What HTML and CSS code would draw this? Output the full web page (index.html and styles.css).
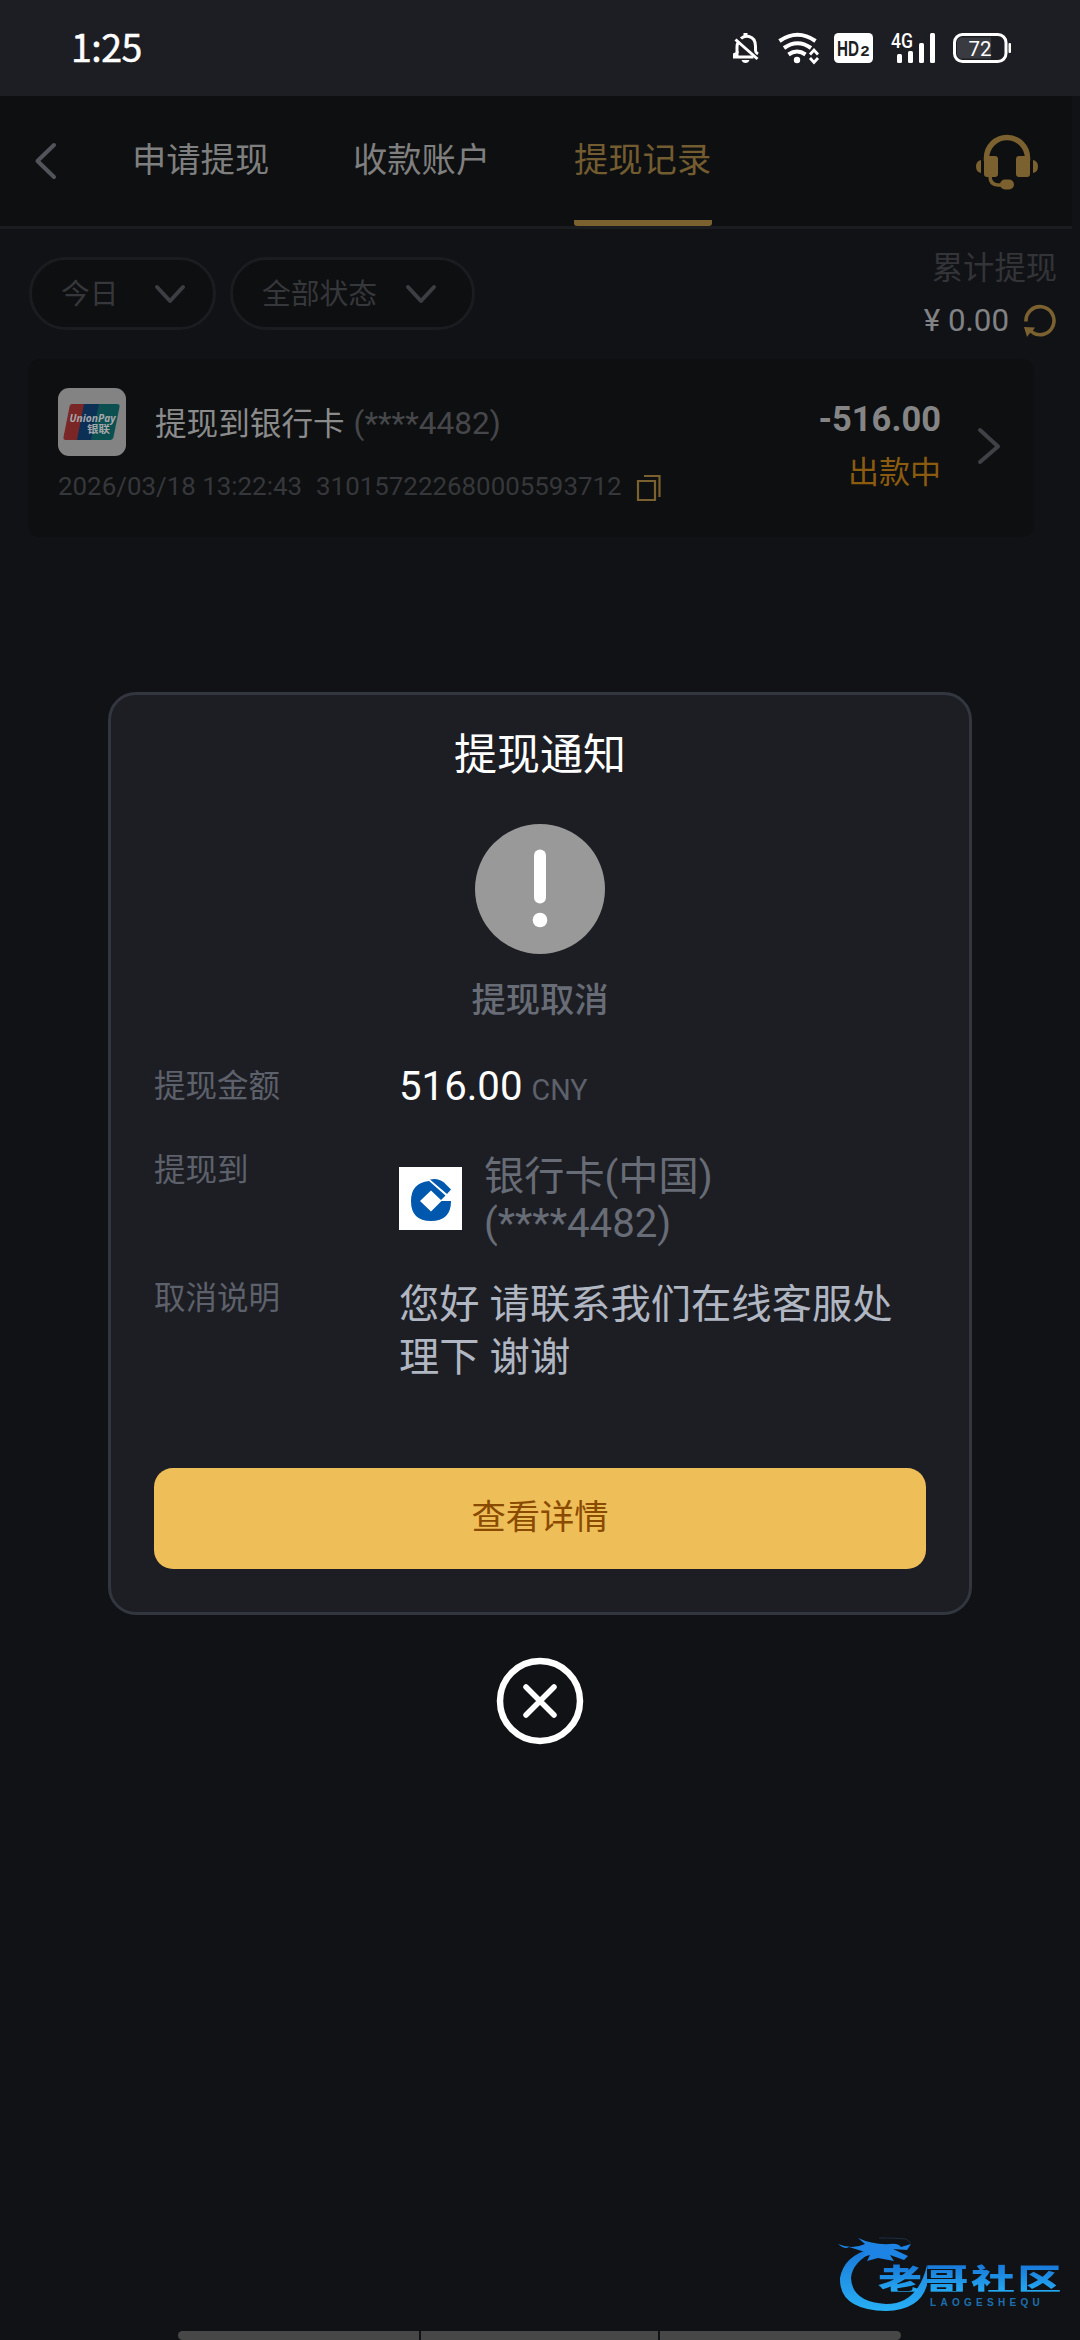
FILE: index.html
```html
<!DOCTYPE html>
<html lang="zh-CN">
<head>
<meta charset="utf-8">
<title>提现记录</title>
<link rel="stylesheet" href="styles.css">
</head>
<body>
<div class="screen">
  <div class="statusbar">
    <span class="clock">1:25</span>
    <svg class="status-icons" width="290" height="40" viewBox="728 28 290 40" fill="#fff">
      <g fill="none" stroke="#fff" stroke-width="3">
        <path d="M734.500 57h19M737 57V47q0-3 1.500-5M741 38.500q3-3 8-2q6.500 1.500 6.500 10v4q0 2 2.500 3.500M734.500 58.500v-4q3-1 3-3"/>
        <path d="M735.500 39.500l22 19.500"/>
      </g>
      <rect x="743.500" y="33" width="4" height="4"/><path d="M741.500 60h8q-1 3-4 3t-4-3z"/>
      <g fill="none" stroke="#fff" stroke-width="4">
        <path d="M779.500 41q18-12.500 36 0"/><path d="M784 48q13.500-9.500 27 0"/><path d="M788.500 54.500q8.500-6 17 0"/>
      </g>
      <circle cx="797" cy="60" r="3.200"/>
      <path d="M810 54.500l4-4.500 4 4.500M810 58l4 4.500 4-4.500" fill="none" stroke="#fff" stroke-width="2.800"/>
      <rect x="834" y="33" width="39" height="30" rx="4.500"/>
      <text class="hd" x="837" y="56" textLength="22" lengthAdjust="spacingAndGlyphs">HD</text>
      <text class="hd-sub" x="860.500" y="55.500" textLength="9" lengthAdjust="spacingAndGlyphs">2</text>
      <text class="net" x="891" y="48" textLength="22" lengthAdjust="spacingAndGlyphs">4G</text>
      <rect x="897" y="54" width="5" height="9" rx="1.500"/><rect x="908" y="51" width="5" height="12" rx="1.500"/>
      <rect x="919" y="43" width="5" height="20" rx="1.500"/><rect x="930" y="33" width="5" height="30" rx="1.500"/>
      <rect x="954.500" y="34.500" width="51.500" height="27" rx="8" fill="none" stroke="#fff" stroke-width="3"/>
      <path d="M961 37.500h30v21h-30q-4-1-4-5v-11q0-4 4-5z" fill="#3a3b40"/>
      <rect x="1008.500" y="43" width="2.500" height="10" rx="1"/>
      <text class="level" x="968.500" y="55.500" textLength="23" lengthAdjust="spacingAndGlyphs">72</text>
    </svg>
  </div>

  <header class="topbar">
    <svg class="back" width="24" height="40" viewBox="0 0 24 40"><path d="M20 4L3.500 20 20 36"/></svg>
    <nav class="tabs">
      <span class="tab">申请提现</span>
      <span class="tab">收款账户</span>
      <span class="tab active">提现记录</span>
    </nav>
    <svg class="headset" width="62" height="56" viewBox="0 0 62 56">
      <path d="M10.500 27V24a20.500 20.500 0 0 1 41 0v3" fill="none" stroke="#7a612f" stroke-width="5.500"/>
      <path d="M8 23q0-1 1-1h10q3 0 3 3v15q0 3-3 3h-8q-3 0-3-3zM54 23q0-1-1-1h-10q-3 0-3 3v15q0 3 3 3h8q3 0 3-3zM5 26v13q-5-1-5-6.500t5-6.500zM57 26v13q5-1 5-6.500t-5-6.500z"/>
      <path d="M14 42q0 9 8 9h6" fill="none" stroke="#7a612f" stroke-width="3.500"/>
      <rect x="24" y="45.500" width="14" height="10" rx="5"/>
    </svg>
  </header>

  <section class="filters">
    <div class="pill pill-day"><span>今日</span><svg width="34" height="22" viewBox="0 0 34 22"><path d="M4 4l13 14L30 4"/></svg></div>
    <div class="pill pill-state"><span>全部状态</span><svg width="34" height="22" viewBox="0 0 34 22"><path d="M4 4l13 14L30 4"/></svg></div>
    <div class="total">
      <div class="total-label">累计提现</div>
      <div class="total-value"><span>¥ 0.00</span>
        <svg width="34" height="34" viewBox="0 0 34 34"><path d="M3 17.500a14 14 0 1 1 6.500 11" fill="none" stroke="#7a612f" stroke-width="3.600"/><path d="M1 23l11 .5-2 3 2 4-5-1.500-3 4z" fill="#7a612f"/></svg>
      </div>
    </div>
  </section>

  <article class="record">
    <div class="record-main">
      <div class="record-head">
        <svg class="unionpay" width="68" height="68" viewBox="0 0 68 68">
          <rect width="68" height="68" rx="11" fill="#838383"/>
          <path d="M14 16h14l-8 36H8q-3 0-2.500-3l6-30q.5-3 2.500-3z" fill="#7a2526"/>
          <path d="M26 16h17l-7 36H19z" fill="#0b2f55"/>
          <path d="M41 16h18q3 0 2.500 3l-6 30q-.7 3-3.500 3H33z" fill="#0b4f50"/>
          <text class="up-latin" x="11.500" y="34" textLength="46" lengthAdjust="spacingAndGlyphs">UnionPay</text>
          <text class="up-cjk" x="29" y="45" textLength="23" lengthAdjust="spacingAndGlyphs">银联</text>
        </svg>
        <span class="record-title">提现到银行卡</span><span class="record-card">(****4482)</span>
      </div>
      <div class="record-meta"><span>2026/03/18 13:22:43</span><span>310157222680005593712</span>
        <svg width="26" height="28" viewBox="0 0 26 28"><path d="M2 7h17v19H2zM8 2h15.500v21"/></svg>
      </div>
    </div>
    <div class="record-amount"><b>-516.00</b><span>出款中</span></div>
    <svg class="go" width="26" height="40" viewBox="0 0 26 40"><path d="M4 4l18 16.500L4 36"/></svg>
  </article>

  <div class="overlay">
    <section class="modal">
      <h1>提现通知</h1>
      <svg class="notice" width="130" height="130" viewBox="0 0 130 130"><circle cx="65" cy="65" r="65" fill="#999"/><rect x="59" y="25.500" width="12" height="54" rx="6" fill="#fff"/><circle cx="65" cy="96" r="7.300" fill="#fff"/></svg>
      <p class="state">提现取消</p>
      <div class="detail amount"><span class="label">提现金额</span><div class="value"><span class="num">516.00</span><span class="unit">CNY</span></div></div>
      <div class="detail bank"><span class="label">提现到</span>
        <div class="value bank-value">
          <svg width="63" height="63" viewBox="0 0 63 63"><rect width="63" height="63" fill="#fff"/>
            <path d="M30 14Q12 16 12 34q0 20 20 20t20-20h-9.500L32 44.500 21 34l11-10.500 10 9.500 4.500-4.500z" fill="#0058ae"/>
            <path d="M31 12.500q8-2 14 3l7 7-4 4.500z" fill="#0058ae"/></svg>
          <div>银行卡(中国)<br>(****4482)</div>
        </div>
      </div>
      <div class="detail"><span class="label">取消说明</span><div class="value note">您好 请联系我们在线客服处理下 谢谢</div></div>
      <button class="cta">查看详情</button>
    </section>
    <svg class="close" width="88" height="88" viewBox="0 0 88 88"><circle cx="44" cy="44" r="40"/><path d="M30 30l28 28M58 30L30 58"/></svg>
  </div>

  <div class="watermark">
    <svg width="96" height="80" viewBox="0 0 96 80">
      <defs><linearGradient id="sky" x1="0" y1="0" x2="0" y2="1"><stop offset="0" stop-color="#1b78d8"/><stop offset="1" stop-color="#27b0f5"/></linearGradient></defs>
      <path d="M34 14Q8 21 4 43q-1 32 46 33 34-1 41-26V30Q82 69 50 69 16 67 15 43q1-16 24-27z" fill="url(#sky)"/>
      <path d="M2 9q14 6 27 0l-7-6q15 7 32 6 8-1 11 3l10-3-4 6-14-1 15 7-4 4-14-5 4 6-16-3-11 3 3-6-8 2 3-5-16-5Q9 15 2 9z" fill="#1d83e4"/>
      <path d="M43 3q18 0 27 1l5 4" fill="none" stroke="#1c2f41"/>
    </svg>
    <div class="brand"><strong>老哥社区</strong><small>LAOGESHEQU</small></div>
  </div>
  <div class="homebar"><i></i><i></i><i></i></div>
</div>
</body>
</html>
```
FILE: styles.css
```css
* { box-sizing: border-box; }
body { margin: 0; background: #111216; font-family: Roboto, "Noto Sans CJK SC", sans-serif; }
svg { display: block; flex: none; }
.screen { position: relative; width: 1080px; height: 2340px; overflow: hidden; background: #111216; }

.statusbar { height: 96px; padding: 0 62px 0 71px; display: flex; align-items: center; justify-content: space-between; background: #1d1e23; color: #fff; }
.clock { padding-bottom: 4px; font: 400 37.500px/52px "Noto Sans CJK SC", sans-serif; letter-spacing: -.5px; -webkit-text-stroke: .5px #fff; }
.hd { font: 700 22px "Liberation Sans", sans-serif; fill: #1d1e23; }
.hd-sub { font: 700 15px "Liberation Sans", sans-serif; fill: #1d1e23; }
.net { font: 500 20px Roboto, sans-serif; fill: #fff; }
.level { font: 400 21px Roboto, sans-serif; fill: #fff; }

.topbar { width: 1072px; height: 133px; padding-left: 34px; padding-right: 34px; display: flex; align-items: flex-start; background: #0e0f10; border-bottom: 3px solid #1b1c1f; }
.back { margin-top: 45px; fill: none; stroke: #51555b; stroke-width: 4; stroke-linecap: round; stroke-linejoin: round; }
.tabs { display: flex; gap: 83px; margin-left: 74px; flex: 1; }
.tab { width: 138px; height: 130px; line-height: 129px; font-size: 34.300px; color: #7f7f7f; }
.tab.active { color: #735c30; background: linear-gradient(#7a612f, #7a612f) bottom / 100% 6px no-repeat; border-radius: 0 0 3px 3px; }
.headset { margin-top: 38px; fill: #7a612f; }

.filters { height: 130px; padding: 18px 23px 0 29px; display: flex; align-items: flex-start; gap: 14px; }
.pill { height: 73px; margin-top: 10px; border: 3px solid #1b1c20; border-radius: 37px; background: #0e0f10; display: flex; align-items: center; justify-content: space-between; padding: 0 26px 0 29px; font-size: 28.750px; line-height: 40px; color: #36373b; }
.pill svg { fill: none; stroke: #3c3e43; stroke-width: 4; stroke-linecap: round; stroke-linejoin: round; }
.pill-day { width: 187px; }
.pill-state { width: 245px; padding-right: 34px; }
.total { margin-left: auto; }
.total-label { padding-top: 2px; font-size: 31.300px; line-height: 40px; color: #333438; text-align: right; }
.total-value { display: flex; align-items: center; gap: 14px; margin-top: 14px; font-size: 31.300px; line-height: 36px; color: #818284; }

.record { width: 1006px; height: 178px; margin-left: 28px; padding: 29px 32px 0 30px; border-radius: 12px; background: #0e0f10; display: flex; }
.record-main { flex: 1; }
.record-head { display: flex; align-items: center; height: 68px; font-size: 31.600px; line-height: 46px; }
.record-title { margin-left: 29px; padding-top: 5px; color: #8b8b8c; }
.record-card { margin-left: 9px; padding-top: 4px; color: #46474b; }
.up-latin { font: italic 700 11px "Open Sans", sans-serif; fill: #a5a8ac; }
.up-cjk { font: 700 10px "Noto Sans CJK SC", sans-serif; fill: #a5a8ac; }
.record-meta { display: flex; align-items: center; height: 30px; margin-top: 15px; font-size: 25.900px; line-height: 30px; color: #36373b; white-space: nowrap; }
.record-meta span + span { margin-left: 14px; }
.record-meta svg { margin: 4px 0 0 14px; fill: none; stroke: #7a612f; stroke-width: 2.200; }
.record-amount { display: flex; flex-direction: column; align-items: flex-end; color: #858586; }
.record-amount b { font-size: 34.500px; line-height: 40px; margin-top: 11px; }
.record-amount span { font-size: 31px; line-height: 42px; margin-top: 13px; color: #8b5b10; }
.go { margin: 38px 0 0 35px; fill: none; stroke: #3f4146; stroke-width: 4; stroke-linecap: round; stroke-linejoin: round; }

.overlay { position: absolute; left: 0; right: 0; top: 692px; display: flex; flex-direction: column; align-items: center; }
.modal { width: 864px; height: 923px; padding: 0 43px; border: 3px solid #32363f; border-radius: 28px; background: #1d1e23; display: flex; flex-direction: column; }
.modal h1 { margin: 30px 0 0; font-size: 43px; font-weight: 400; line-height: 60px; text-align: center; color: #fff; }
.notice { align-self: center; margin-top: 39px; }
.state { margin: 23px 0 0; font-size: 34.300px; font-weight: 500; line-height: 46px; text-align: center; color: #676c76; }
.detail { display: flex; color: #676c76; }
.label { width: 245px; font-size: 31.500px; line-height: 44px; color: #5d616b; }
.amount { height: 84px; margin-top: 42px; }
.num { font-size: 40.200px; line-height: 44px; color: #fff; }
.unit { margin-left: 9px; font-size: 28.700px; color: #5d616b; }
.bank { height: 128px; }
.bank-value { display: flex; align-items: center; gap: 22px; height: 98px; font-size: 40.200px; line-height: 47px; }
.bank-value div { padding-top: 4px; }
.note { width: 510px; padding-top: 1px; font-size: 40.300px; line-height: 53px; color: #b0b6c2; }
.cta { height: 101px; margin: auto 0 43px; padding: 0 0 9px; border: 0; border-radius: 19px; background: #eebf59; font: 400 34.300px/50px "Noto Sans CJK SC", sans-serif; color: #8a4a00; }
.close { margin-top: 42px; fill: none; stroke: #fff; stroke-width: 6.500; stroke-linecap: round; }
.close path { stroke-width: 5.500; }

.watermark { position: absolute; left: 836px; top: 2235px; display: flex; }
.brand { margin: 24px 0 0 -54px; display: flex; flex-direction: column; }
.brand strong { font: 900 44px/38px "Noto Sans CJK SC", sans-serif; letter-spacing: 2.500px; background: linear-gradient(#1877d8, #25a9f2); -webkit-background-clip: text; background-clip: text; color: transparent; white-space: nowrap; transform: scaleY(.72); }
.brand small { margin-left: 52px; font: 700 10px/12px "Liberation Sans", sans-serif; letter-spacing: 4.300px; color: #1c6fae; }
.homebar { position: absolute; left: 178px; top: 2331px; width: 723px; height: 9px; display: flex; gap: 2px; border-radius: 5px; overflow: hidden; }
.homebar i { background: #474748; flex: 241; }
.homebar i:nth-child(2) { flex: 237; }
```
